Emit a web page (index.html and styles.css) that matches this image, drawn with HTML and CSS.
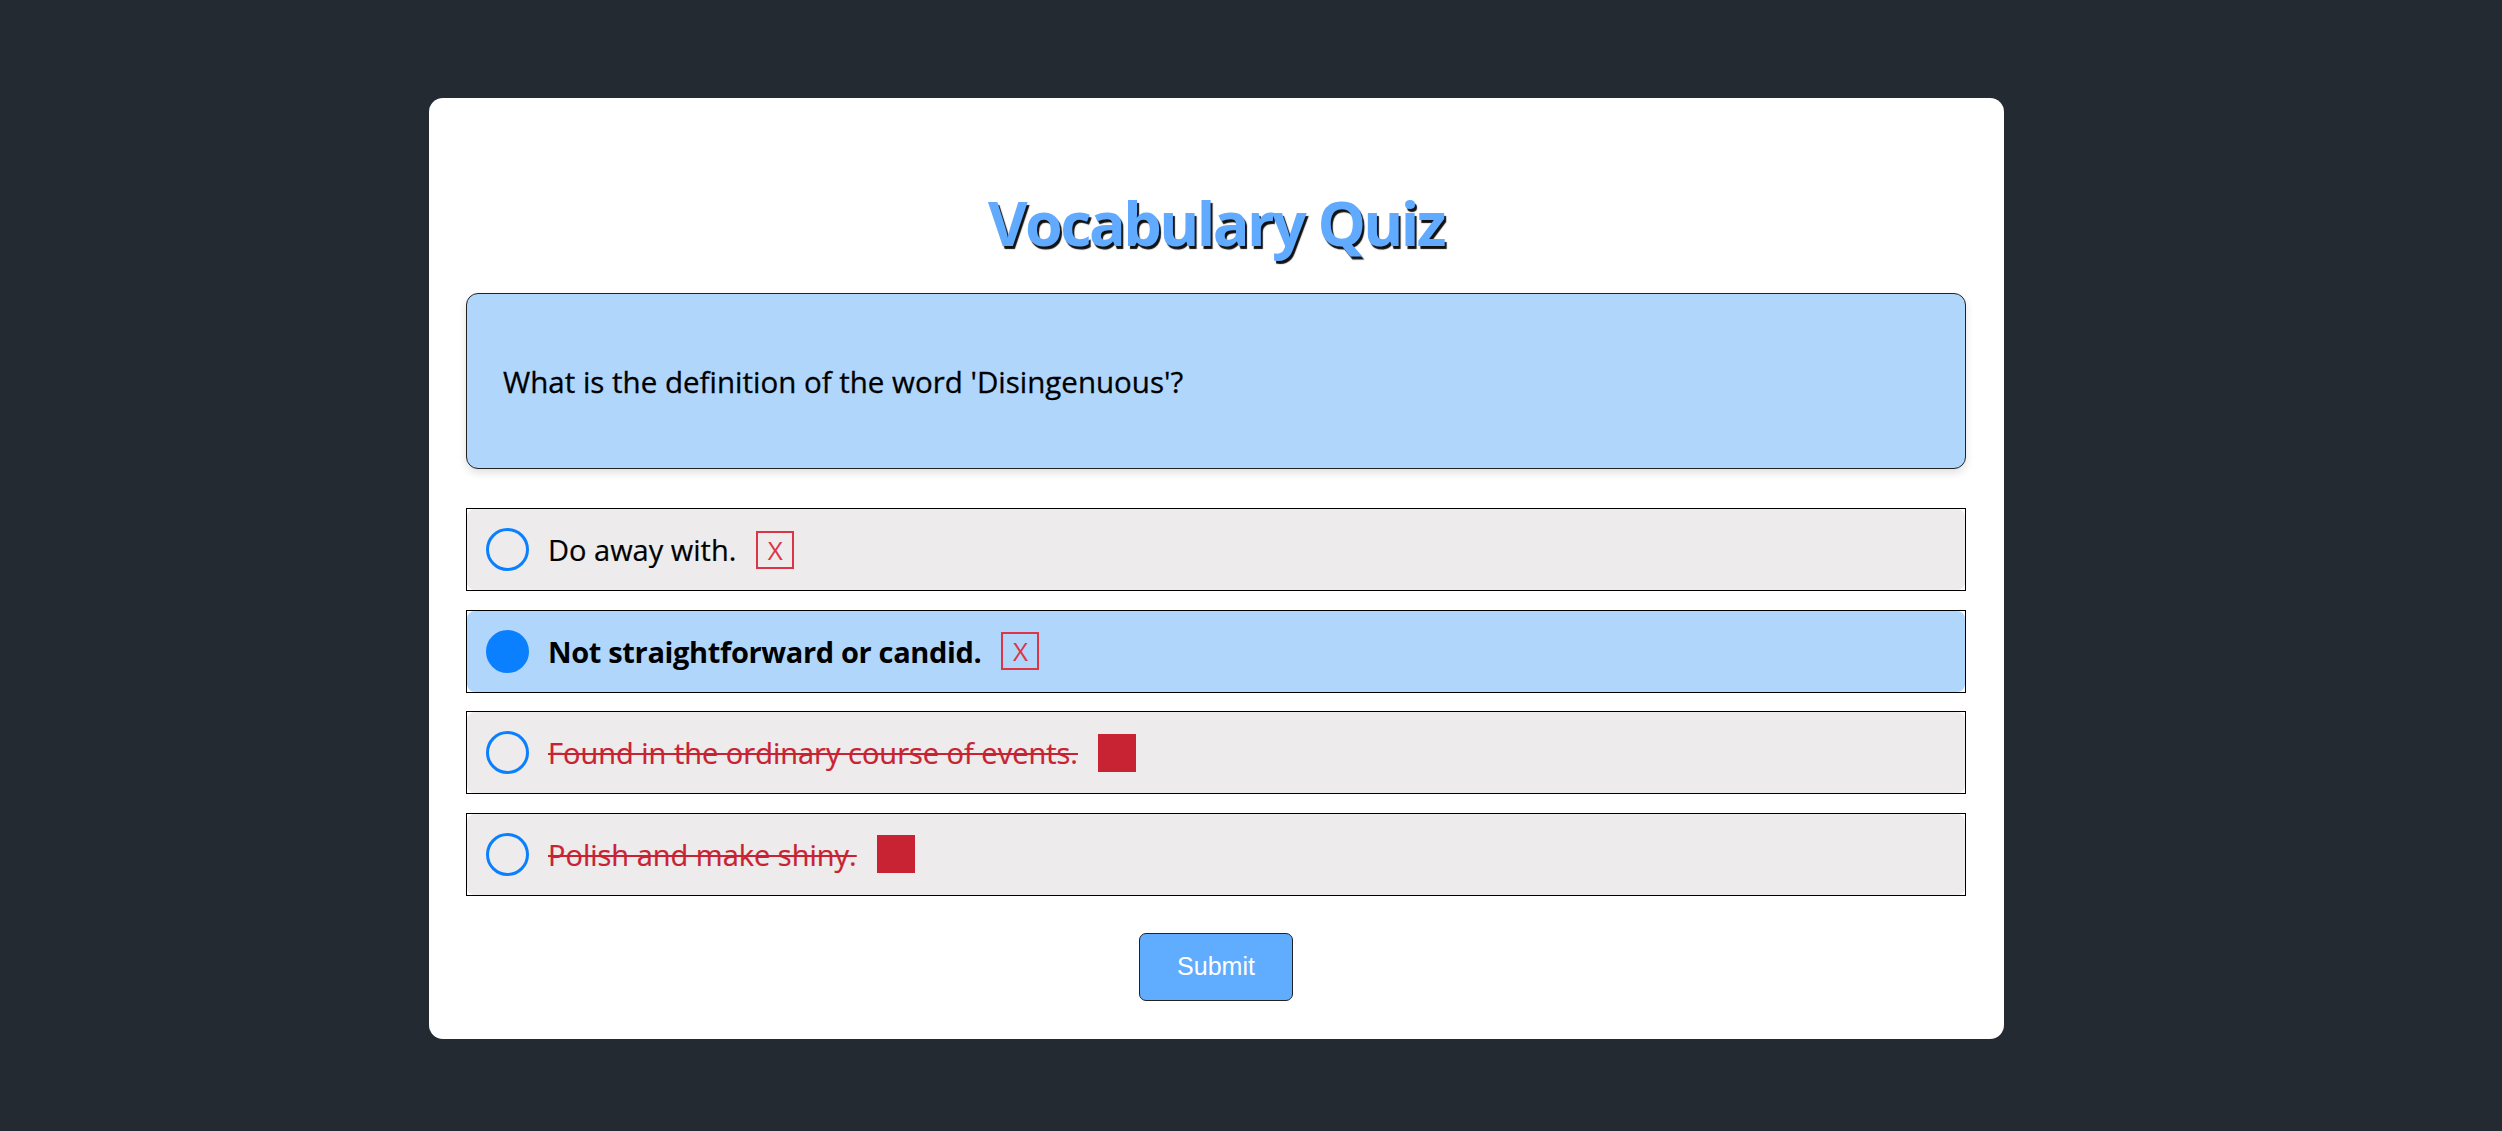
FILE: index.html
```html
<!DOCTYPE html>
<html lang="en">
<head>
<meta charset="utf-8">
<title>Vocabulary Quiz</title>
<link rel="stylesheet" href="styles.css">
</head>
<body>
<div class="page">
  <main class="card">
    <h1 class="title">Vocabulary Quiz</h1>
    <div class="question">
      <p class="question-text">What is the definition of the word 'Disingenuous'?</p>
    </div>
    <div class="options">
      <div class="option">
        <label class="option-label">
          <span class="radio"></span>
          <span class="option-text">Do away with.</span>
          <span class="mark mark-x">X</span>
        </label>
      </div>
      <div class="option">
        <label class="option-label selected">
          <span class="radio checked"></span>
          <span class="option-text bold">Not straightforward or candid.</span>
          <span class="mark mark-x">X</span>
        </label>
      </div>
      <div class="option">
        <label class="option-label">
          <span class="radio"></span>
          <span class="option-text struck">Found in the ordinary course of events.</span>
          <span class="mark mark-fill"></span>
        </label>
      </div>
      <div class="option">
        <label class="option-label">
          <span class="radio"></span>
          <span class="option-text struck">Polish and make shiny.</span>
          <span class="mark mark-fill"></span>
        </label>
      </div>
    </div>
    <div class="actions">
      <button class="submit" type="button">Submit</button>
    </div>
  </main>
</div>
</body>
</html>
```

FILE: styles.css
```css
* { box-sizing: border-box; }

html, body {
  margin: 0;
  padding: 0;
  background: #242a32;
}

body {
  font-family: "Open Sans", "Noto Sans", sans-serif;
  color: #000;
}

.page {
  padding: 98px 0 92px 429px;
}

.card {
  width: 1575px;
  background: #ffffff;
  border-radius: 14px;
  padding: 0 38px 38px 37px;
}

.title {
  margin: 0;
  padding-top: 85px;
  height: 195px;
  text-align: center;
  font-size: 61px;
  line-height: 80px;
  font-weight: 700;
  letter-spacing: -2.6px;
  color: #60aaff;
  text-shadow: 2px 3px 1px #111;
}

.question {
  height: 176px;
  display: flex;
  align-items: center;
  background: #b0d6fc;
  border: 1px solid #222;
  border-radius: 12px;
  padding: 0 36px;
  box-shadow: 0 4px 8px rgba(0, 0, 0, 0.12);
}

.question-text {
  margin: 0;
  font-size: 29.5px;
  font-weight: 400;
  -webkit-text-stroke: 0.3px #000;
}

.options {
  margin-top: 39px;
  display: flex;
  flex-direction: column;
  gap: 18.67px;
}

.option {
  height: 83px;
  border: 1px solid #000;
}

.option-label {
  height: 100%;
  display: flex;
  align-items: center;
  background: #edebeb;
  border-radius: 8px;
  padding-left: 19px;
}

.option-label.selected {
  background: #b0d6fc;
}

.radio {
  width: 43px;
  height: 43px;
  flex: none;
  border: 3px solid #0a80ff;
  border-radius: 50%;
  margin-right: 19px;
}

.radio.checked {
  background: #0a80ff;
}

.option-text {
  font-size: 29px;
  -webkit-text-stroke: 0.2px currentColor;
}

.option-text.bold {
  font-weight: 700;
  letter-spacing: -0.35px;
  -webkit-text-stroke: 0;
}

.option-text.struck {
  color: #c82333;
  text-decoration: line-through;
  text-decoration-thickness: 2px;
}

.mark {
  width: 38px;
  height: 38px;
  flex: none;
  margin-left: 20px;
  display: flex;
  align-items: center;
  justify-content: center;
}

.mark-x {
  border: 2px solid #dc3545;
  color: #dc3545;
  font-size: 26px;
  line-height: 1;
}

.mark-fill {
  background: #c82333;
}

.actions {
  margin-top: 37px;
  display: flex;
  justify-content: center;
}

.submit {
  width: 154px;
  height: 68px;
  background: #60acfe;
  color: #ffffff;
  border: 1px solid #222;
  border-radius: 7px;
  font-family: "Liberation Sans", Arial, sans-serif;
  font-size: 25px;
  padding: 0;
}
```
